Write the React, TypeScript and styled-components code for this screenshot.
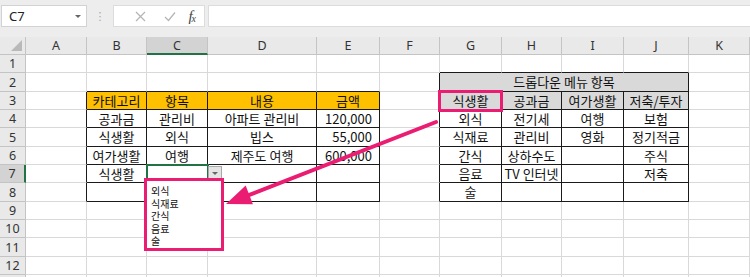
import React from 'react';
import styled, { createGlobalStyle } from 'styled-components';

const GlobalStyle = createGlobalStyle`
  html, body { margin: 0; padding: 0; background: #ffffff; }
  body { font-family: "Noto Sans", "Noto Sans CJK KR", sans-serif; }
`;

const PINK = '#ea1d72';
const GREEN = '#217346';
const ORANGE = '#ffc000';
const HEAD_GREY = '#d9d9d9';
const GRID = '#d9d9d9';

const COLS = [26, 61, 60, 61, 109, 63, 60, 62, 60, 62, 65, 61];
const LETTERS = ['A', 'B', 'C', 'D', 'E', 'F', 'G', 'H', 'I', 'J', 'K'];
const ROW_COUNT = 13;
const VISIBLE_ROWS = 12;
const ROW_HEIGHTS = Array.from(
  { length: ROW_COUNT },
  (_, i) => Math.round(55 + (i + 1) * 18.333) - Math.round(55 + i * 18.333)
);

type CellData = { t: string; bg?: string; align?: 'left' | 'center' | 'right' };

const DATA: Record<string, CellData> = {
  B3: { t: '카테고리', bg: ORANGE },
  C3: { t: '항목', bg: ORANGE },
  D3: { t: '내용', bg: ORANGE },
  E3: { t: '금액', bg: ORANGE },
  B4: { t: '공과금' },
  C4: { t: '관리비' },
  D4: { t: '아파트 관리비' },
  E4: { t: '120,000', align: 'right' },
  B5: { t: '식생활' },
  C5: { t: '외식' },
  D5: { t: '빕스' },
  E5: { t: '55,000', align: 'right' },
  B6: { t: '여가생활' },
  C6: { t: '여행' },
  D6: { t: '제주도 여행' },
  E6: { t: '600,000', align: 'right' },
  B7: { t: '식생활' },
  G2: { t: '드롭다운 메뉴 항목', bg: HEAD_GREY },
  G3: { t: '식생활', bg: HEAD_GREY },
  H3: { t: '공과금', bg: HEAD_GREY },
  I3: { t: '여가생활', bg: HEAD_GREY },
  J3: { t: '저축/투자', bg: HEAD_GREY },
  G4: { t: '외식' },
  G5: { t: '식재료' },
  G6: { t: '간식' },
  G7: { t: '음료' },
  G8: { t: '술' },
  H4: { t: '전기세' },
  H5: { t: '관리비' },
  H6: { t: '상하수도' },
  H7: { t: 'TV 인터넷' },
  I4: { t: '여행' },
  I5: { t: '영화' },
  J4: { t: '보험' },
  J5: { t: '정기적금' },
  J6: { t: '주식' },
  J7: { t: '저축' },
};

const LIST_ITEMS = ['외식', '식재료', '간식', '음료', '술'];

const inTable = (r: number, c: number) =>
  (r >= 3 && r <= 8 && c >= 2 && c <= 5) || (r >= 2 && r <= 8 && c >= 7 && c <= 10);

/* ---------- layout ---------- */

const Page = styled.div`
  position: relative;
  width: 750px;
  height: 277px;
  overflow: hidden;
  background: #ffffff;
`;

const FormulaBar = styled.div`
  height: 37px;
  box-sizing: border-box;
  background: #ededed;
  display: flex;
  align-items: flex-start;
  padding: 5px 0 0 1px;
`;

const NameBox = styled.div`
  width: 86px;
  height: 22px;
  box-sizing: border-box;
  background: #ffffff;
  border: 1px solid #d2d2d2;
  display: flex;
  align-items: center;
  justify-content: space-between;
  padding: 0 5px 0 7px;
  font-family: "Noto Sans", sans-serif;
  font-size: 13px;
  color: #222;
`;

const TinyCaret = styled.span`
  width: 0;
  height: 0;
  border-left: 3px solid transparent;
  border-right: 3px solid transparent;
  border-top: 3px solid #666;
`;

const Grip = styled.div`
  width: 26px;
  height: 22px;
  display: flex;
  align-items: center;
  justify-content: center;
  color: #a8a8a8;
  font-size: 11px;
  font-family: "DejaVu Sans", sans-serif;
`;

const FxBox = styled.div`
  width: 92px;
  height: 22px;
  box-sizing: border-box;
  background: #ffffff;
  border: 1px solid #dcdcdc;
  display: flex;
  align-items: center;
  padding: 0 8px 0 11px;
`;

const FxIcon = styled.span`
  width: 30px;
  display: flex;
  align-items: center;
  justify-content: center;
`;

const FxText = styled.span`
  margin-left: auto;
  font-family: "Liberation Serif", serif;
  font-style: italic;
  font-size: 15px;
  line-height: 1;
  color: #444;
  sub {
    font-size: 10px;
    vertical-align: -1px;
    margin-left: -1px;
  }
`;

const FormulaInput = styled.div`
  flex: 1;
  height: 22px;
  margin-left: 3px;
  box-sizing: border-box;
  background: #ffffff;
  border: 1px solid #dcdcdc;
  border-right: none;
`;

const Sheet = styled.div`
  display: grid;
  grid-template-columns: ${COLS.map((w) => `${w}px`).join(' ')};
  grid-template-rows: 18px ${ROW_HEIGHTS.map((h) => `${h}px`).join(' ')};
`;

const Corner = styled.div`
  position: relative;
  background: #e9e9e9;
  box-sizing: border-box;
  border-right: 1px solid #c4c4c4;
  border-bottom: 1px solid #c4c4c4;
  &::after {
    content: '';
    position: absolute;
    right: 3px;
    bottom: 3px;
    width: 0;
    height: 0;
    border-left: 11px solid transparent;
    border-bottom: 11px solid #b9b9b9;
  }
`;

const ColHead = styled.div<{ $active?: boolean }>`
  box-sizing: border-box;
  background: ${(p) => (p.$active ? '#d3d3d3' : '#e9e9e9')};
  border-right: 1px solid #c4c4c4;
  border-bottom: ${(p) => (p.$active ? `2px solid ${GREEN}` : '1px solid #c4c4c4')};
  display: flex;
  align-items: center;
  justify-content: center;
  font-family: "Noto Sans", sans-serif;
  font-size: 12.5px;
  color: #333;
  padding-top: ${(p) => (p.$active ? '1px' : '0')};
`;

const RowHead = styled.div<{ $active?: boolean }>`
  box-sizing: border-box;
  background: ${(p) => (p.$active ? '#d3d3d3' : '#e9e9e9')};
  border-right: ${(p) => (p.$active ? `2px solid ${GREEN}` : '1px solid #c4c4c4')};
  border-bottom: 1px solid #c4c4c4;
  display: flex;
  align-items: center;
  justify-content: center;
  font-family: "Noto Sans", sans-serif;
  font-size: 12.5px;
  color: #333;
`;

const Cell = styled.div<{
  $span?: number;
  $bg?: string;
  $align?: 'left' | 'center' | 'right';
  $rightDark?: boolean;
  $bottomDark?: boolean;
}>`
  grid-column: span ${(p) => p.$span ?? 1};
  box-sizing: border-box;
  background: ${(p) => p.$bg ?? '#ffffff'};
  border-right: 1px solid ${(p) => (p.$rightDark ? '#1a1a1a' : GRID)};
  border-bottom: 1px solid ${(p) => (p.$bottomDark ? '#1a1a1a' : GRID)};
  display: flex;
  align-items: center;
  justify-content: ${(p) =>
    p.$align === 'right' ? 'flex-end' : p.$align === 'left' ? 'flex-start' : 'center'};
  padding: 0 ${(p) => (p.$align === 'right' ? '7px' : '1px')} 1px 1px;
  font-family: "Noto Sans CJK KR", "Noto Sans", sans-serif;
  font-size: 13px;
  line-height: 1;
  color: #111;
  white-space: nowrap;
  overflow: hidden;
`;

/* ---------- overlays ---------- */

const Selection = styled.div`
  position: absolute;
  left: 146px;
  top: 164px;
  width: 63px;
  height: 20px;
  box-sizing: border-box;
  border: 2px solid ${GREEN};
`;

const DropButton = styled.div`
  position: absolute;
  left: 208px;
  top: 166px;
  width: 14px;
  height: 15px;
  box-sizing: border-box;
  background: #e4e4e4;
  border: 1px solid #a9a9a9;
  display: flex;
  align-items: center;
  justify-content: center;
`;

const DropList = styled.div`
  position: absolute;
  left: 144px;
  top: 178px;
  width: 80px;
  height: 73px;
  box-sizing: border-box;
  border: 3px solid ${PINK};
  background: #ffffff;
  padding: 4px 0 0 4px;
`;

const ListItem = styled.div`
  height: 12.5px;
  font-family: "Noto Sans CJK KR", sans-serif;
  font-size: 10px;
  line-height: 12.5px;
  color: #111;
`;

const HighlightBox = styled.div`
  position: absolute;
  left: 438px;
  top: 90px;
  width: 65px;
  height: 22px;
  box-sizing: border-box;
  border: 3px solid ${PINK};
`;

const ArrowLayer = styled.svg`
  position: absolute;
  left: 0;
  top: 0;
  width: 750px;
  height: 277px;
  pointer-events: none;
`;

/* ---------- component ---------- */

export default function App() {
  const cells: React.ReactNode[] = [];

  cells.push(<Corner key="corner" />);
  LETTERS.forEach((l) => cells.push(<ColHead key={`h${l}`} $active={l === 'C'}>{l}</ColHead>));

  for (let r = 1; r <= ROW_COUNT; r++) {
    cells.push(
      <RowHead key={`r${r}`} $active={r === 7}>
        {r <= VISIBLE_ROWS ? r : null}
      </RowHead>
    );
    for (let c = 1; c <= 11; c++) {
      if (r === 2 && c >= 8 && c <= 10) continue;
      const span = r === 2 && c === 7 ? 4 : 1;
      const lastCol = c + span - 1;
      const key = `${LETTERS[c - 1]}${r}`;
      const d = DATA[key];
      cells.push(
        <Cell
          key={key}
          $span={span}
          $bg={d?.bg}
          $align={d?.align}
          $rightDark={inTable(r, lastCol) || inTable(r, lastCol + 1)}
          $bottomDark={inTable(r, c) || inTable(r + 1, c)}
        >
          {d?.t}
        </Cell>
      );
    }
  }

  // arrow geometry
  const tip = { x: 226, y: 204 };
  const start = { x: 436, y: 122 };
  const dx = start.x - tip.x;
  const dy = start.y - tip.y;
  const len = Math.hypot(dx, dy);
  const ux = dx / len;
  const uy = dy / len;
  const headLen = 25;
  const headHalf = 10;
  const bx = tip.x + ux * headLen;
  const by = tip.y + uy * headLen;
  const px = -uy;
  const py = ux;
  const head = `${tip.x},${tip.y} ${bx + px * headHalf},${by + py * headHalf} ${bx - px * headHalf},${by - py * headHalf}`;

  return (
    <>
      <GlobalStyle />
      <Page>
        <FormulaBar>
          <NameBox>
            C7
            <TinyCaret />
          </NameBox>
          <Grip>⋮</Grip>
          <FxBox>
            <FxIcon>
              <svg width="11" height="11" viewBox="0 0 11 11">
                <path d="M1 1 L10 10 M10 1 L1 10" stroke="#b4b4b4" strokeWidth="1.2" fill="none" />
              </svg>
            </FxIcon>
            <FxIcon>
              <svg width="12" height="11" viewBox="0 0 12 11">
                <path d="M1 6 L4.5 9.5 L11 1.5" stroke="#b4b4b4" strokeWidth="1.2" fill="none" />
              </svg>
            </FxIcon>
            <FxText>
              f<sub>x</sub>
            </FxText>
          </FxBox>
          <FormulaInput />
        </FormulaBar>
        <Sheet>{cells}</Sheet>

        <Selection />
        <DropButton>
          <TinyCaret />
        </DropButton>
        <DropList>
          {LIST_ITEMS.map((it) => (
            <ListItem key={it}>{it}</ListItem>
          ))}
        </DropList>
        <HighlightBox />
        <ArrowLayer viewBox="0 0 750 277">
          <line
            x1={start.x}
            y1={start.y}
            x2={bx - ux * 2}
            y2={by - uy * 2}
            stroke={PINK}
            strokeWidth="4"
            strokeLinecap="round"
          />
          <polygon points={head} fill={PINK} />
        </ArrowLayer>
      </Page>
    </>
  );
}
